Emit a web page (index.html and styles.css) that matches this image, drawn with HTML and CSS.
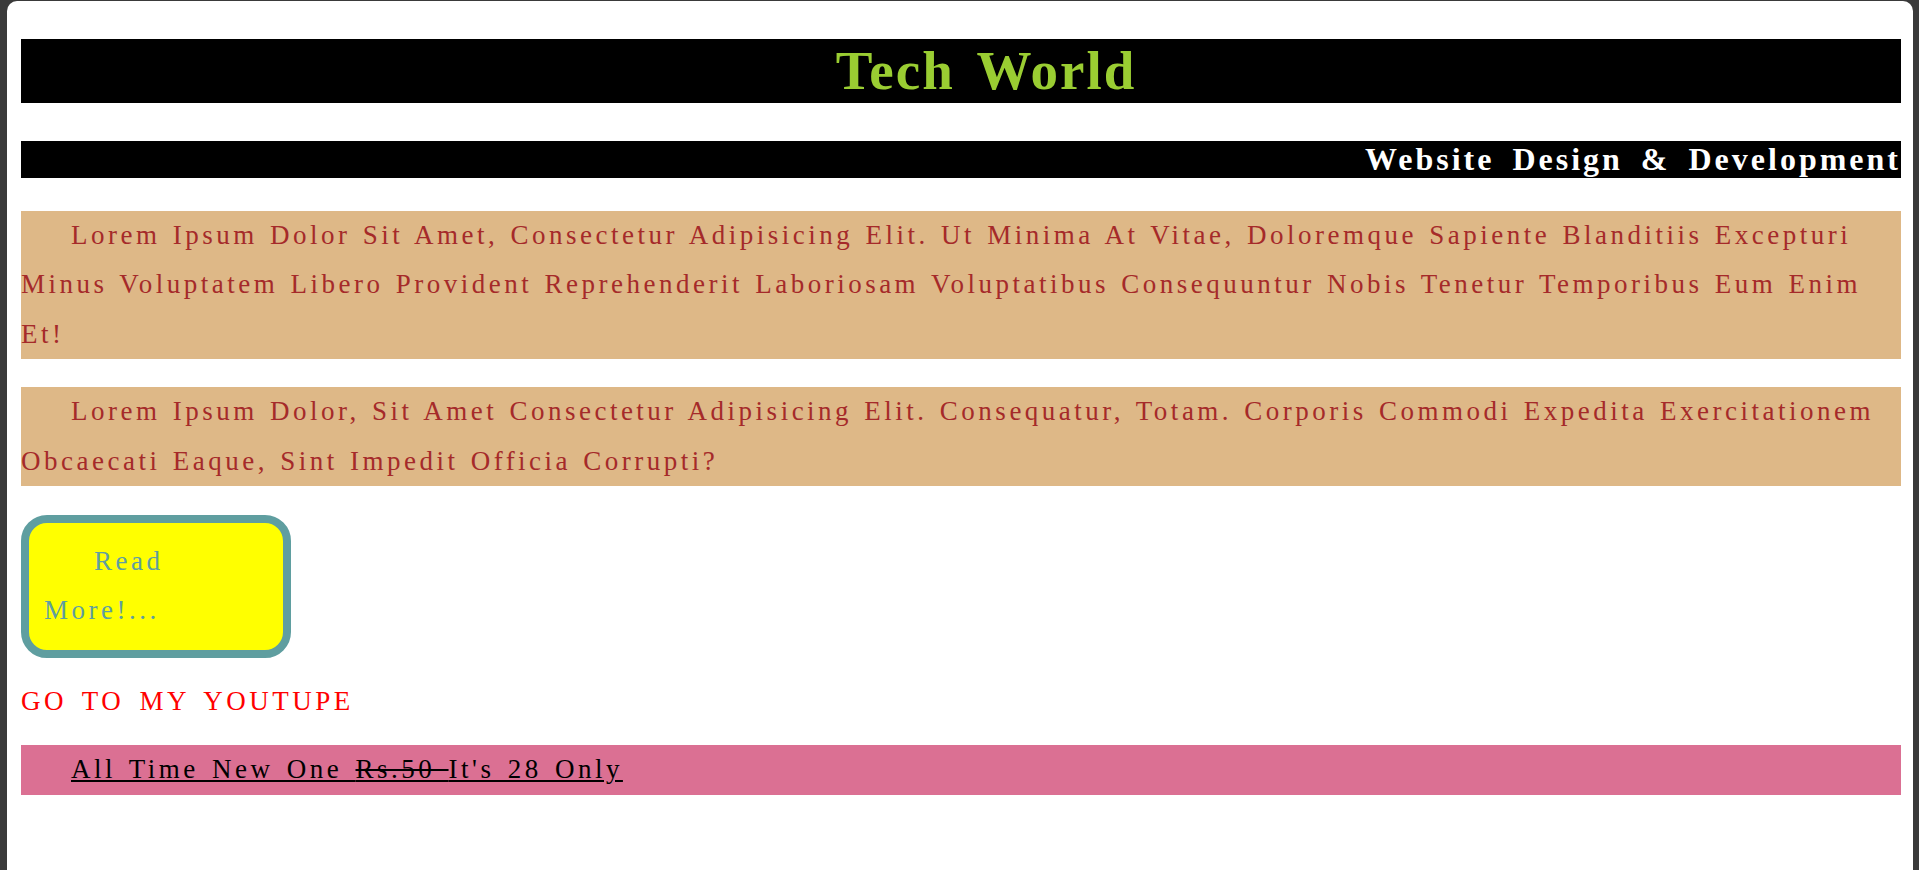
FILE: index.html
```html
<!DOCTYPE html>
<html lang="en">
<head>
<meta charset="utf-8">
<title>Tech World</title>
<link rel="stylesheet" href="styles.css">
</head>
<body>
<div class="page">
  <h1 class="title">Tech World</h1>
  <h2 class="subtitle">Website Design &amp; Development</h2>
  <p class="para">Lorem Ipsum Dolor Sit Amet, Consectetur Adipisicing Elit. Ut Minima At Vitae, Doloremque Sapiente Blanditiis Excepturi Minus Voluptatem Libero Provident Reprehenderit Laboriosam Voluptatibus Consequuntur Nobis Tenetur Temporibus Eum Enim Et!</p>
  <p class="para para-second">Lorem Ipsum Dolor, Sit Amet Consectetur Adipisicing Elit. Consequatur, Totam. Corporis Commodi Expedita Exercitationem Obcaecati Eaque, Sint Impedit Officia Corrupti?</p>
  <div class="readmore">Read More!...</div>
  <a class="yt" href="#">Go to my youtupe</a>
  <p class="offer"><u>All Time New One <s>Rs.50 </s>It's 28 Only</u></p>
</div>
</body>
</html>
```

FILE: styles.css
```css
html, body {
  margin: 0;
  padding: 0;
}

body {
  background: #3a3a3a;
  padding: 1px 6px 0 7px;
  font-family: "Liberation Serif", "Times New Roman", serif;
}

.page {
  background: #ffffff;
  border-radius: 10px 10px 0 0;
  min-height: calc(100vh - 1px);
  box-sizing: border-box;
  padding: 0 12px 0 14px;
  display: flex;
  flex-direction: column;
}

.title {
  margin: 38px 0 0;
  background: #000000;
  color: #9acd32;
  font-size: 55px;
  font-weight: bold;
  line-height: 64px;
  text-align: center;
  text-indent: 50px;
  letter-spacing: 2px;
  word-spacing: 7px;
}

.subtitle {
  margin: 38px 0 0;
  background: #000000;
  color: #ffffff;
  font-size: 32px;
  font-weight: bold;
  line-height: 37px;
  text-align: right;
  letter-spacing: 3px;
  word-spacing: 7px;
}

.para {
  margin: 33px 0 0;
  background: #deb887;
  color: #a52a2a;
  font-size: 27px;
  line-height: 49.4px;
  letter-spacing: 3.5px;
  word-spacing: 2px;
  text-indent: 50px;
}

.para-second {
  margin-top: 28px;
}

.readmore {
  align-self: flex-start;
  margin-top: 29px;
  width: 224px;
  padding: 14px 15px;
  border: 8px solid #5f9ea0;
  border-radius: 26px;
  background: #ffff00;
  color: #5f9ea0;
  font-size: 27px;
  line-height: 49.4px;
  letter-spacing: 3.5px;
  word-spacing: 2px;
  text-indent: 50px;
}

.yt {
  align-self: flex-start;
  margin-top: 19px;
  color: #ff0000;
  text-decoration: none;
  text-transform: uppercase;
  font-size: 27px;
  line-height: 49.4px;
  letter-spacing: 3.5px;
  word-spacing: 5px;
}

.offer {
  margin: 19px 0 0;
  background: #db7093;
  color: #000000;
  font-size: 27px;
  line-height: 49.4px;
  letter-spacing: 3.5px;
  word-spacing: 3px;
  text-indent: 50px;
}
```
